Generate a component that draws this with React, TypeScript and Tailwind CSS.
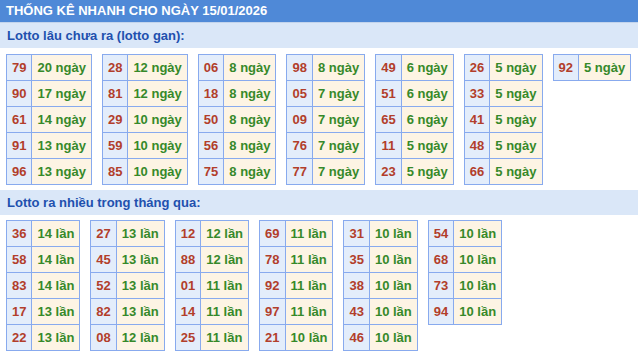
const ganRows: [string, string][][] = [
  [["79", "20"], ["90", "17"], ["61", "14"], ["91", "13"], ["96", "13"]],
  [["28", "12"], ["81", "12"], ["29", "10"], ["59", "10"], ["85", "10"]],
  [["06", "8"], ["18", "8"], ["50", "8"], ["56", "8"], ["75", "8"]],
  [["98", "8"], ["05", "7"], ["09", "7"], ["76", "7"], ["77", "7"]],
  [["49", "6"], ["51", "6"], ["65", "6"], ["11", "5"], ["23", "5"]],
  [["26", "5"], ["33", "5"], ["41", "5"], ["48", "5"], ["66", "5"]],
  [["92", "5"]],
];

const hotRows: [string, string][][] = [
  [["36", "14"], ["58", "14"], ["83", "14"], ["17", "13"], ["22", "13"]],
  [["27", "13"], ["45", "13"], ["52", "13"], ["82", "13"], ["08", "12"]],
  [["12", "12"], ["88", "12"], ["01", "11"], ["14", "11"], ["25", "11"]],
  [["69", "11"], ["78", "11"], ["92", "11"], ["97", "11"], ["21", "10"]],
  [["31", "10"], ["35", "10"], ["38", "10"], ["43", "10"], ["46", "10"]],
  [["54", "10"], ["68", "10"], ["73", "10"], ["94", "10"]],
];

const StatTable = ({ rows, unit }: { rows: [string, string][]; unit: string }) => (
  <table className="border-collapse self-start">
    <tbody>
      {rows.map(([num, count]) => (
        <tr key={num}>
          <td className="border border-[#88aaee] bg-[#e3edfb] px-[5px] py-[5px] text-center leading-[15px] text-[#b23e2b]">
            {num}
          </td>
          <td className="border border-[#88aaee] bg-[#fdf4e4] px-[5px] py-[5px] leading-[15px] text-[#36892a] whitespace-nowrap">
            {count} {unit}
          </td>
        </tr>
      ))}
    </tbody>
  </table>
);

const SectionTitle = ({ children }: { children: string }) => (
  <div className="h-[25px] bg-[#dae7f8] pl-[7px] text-[13px] font-bold leading-[25px] text-[#2150ae]">
    {children}
  </div>
);

export default function App() {
  return (
    <div className="w-[638px] h-[352px] overflow-hidden bg-white font-['Liberation_Sans',Arial,sans-serif] text-[13px] font-bold">
      {/* Header */}
      <div className="h-[22px] bg-[#4f89d7] pl-[6px] text-[13px] leading-[22px] text-white">
        THỐNG KÊ NHANH CHO NGÀY 15/01/2026
      </div>
      <div className="h-px bg-[#c3d4ec]"></div>

      <SectionTitle>Lotto lâu chưa ra (lotto gan):</SectionTitle>
      <div className="flex gap-[10px] pl-[6px] pt-[6px] pb-[5px]">
        {ganRows.map((rows, i) => (
          <StatTable key={i} rows={rows} unit="ngày" />
        ))}
      </div>

      <SectionTitle>Lotto ra nhiều trong tháng qua:</SectionTitle>
      <div className="flex gap-[10px] pl-[6px] pt-[5px]">
        {hotRows.map((rows, i) => (
          <StatTable key={i} rows={rows} unit="lần" />
        ))}
      </div>
    </div>
  );
}
